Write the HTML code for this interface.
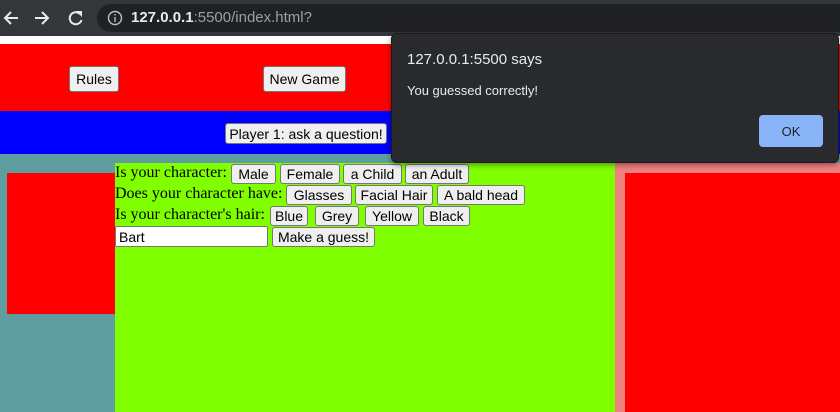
<!DOCTYPE html>
<html><head><meta charset="utf-8"><style>
*{margin:0;padding:0;box-sizing:border-box}
body{width:840px;height:412px;overflow:hidden;position:relative;background:#5f9ea0;font-family:"Liberation Serif",serif}
.a{position:absolute}
.btn{position:absolute;background:#efefef;border:1px solid #767676;border-radius:3px;font:14px "Liberation Sans",sans-serif;color:#000;display:flex;align-items:center;justify-content:center;white-space:nowrap}
.lbl{position:absolute;font-size:16px;color:#000;white-space:nowrap;line-height:20px}
</style></head><body>
<div class="a" style="left:0;top:0;width:840px;height:36px;background:#35363a"></div>
<div class="a" style="left:97px;top:4px;width:760px;height:28px;border-radius:14px;background:#202124"></div>
<svg class="a" style="left:0;top:6px" width="100" height="24" viewBox="0 0 100 24">
<path d="M18 12H6M11 6l-6 6 6 6" stroke="#e8eaed" stroke-width="2" fill="none"/>
<path d="M35 12h12M42 6l6 6-6 6" stroke="#e8eaed" stroke-width="2" fill="none"/>
<path d="M80 8a6 6 0 1 0 1.5 6" stroke="#e8eaed" stroke-width="2" fill="none"/><path d="M76 5h6v6z" fill="#e8eaed"/>
</svg>
<svg class="a" style="left:107px;top:10px" width="16" height="16"><circle cx="8" cy="8" r="6.5" stroke="#bdc1c6" stroke-width="1.4" fill="none"/><rect x="7.3" y="7" width="1.4" height="5" fill="#bdc1c6"/><rect x="7.3" y="4" width="1.4" height="1.5" fill="#bdc1c6"/></svg>
<div class="a" style="left:131px;top:9px;font:15px 'Liberation Sans',sans-serif;color:#e8eaed"><b style="font-weight:600">127.0.0.1</b><span style="color:#9aa0a6">:5500/index.html?</span></div>
<div class="a" style="left:0;top:36px;width:840px;height:8px;background:#fff"></div>
<div class="a" style="left:0;top:44px;width:840px;height:67px;background:#f00"></div>
<div class="a" style="left:0;top:111px;width:840px;height:43px;background:#00f"></div>
<div class="btn" style="left:69px;top:66px;width:50px;height:26px">Rules</div>
<div class="btn" style="left:263px;top:66px;width:83px;height:26px">New Game</div>
<div class="btn" style="left:225px;top:123px;width:162px;height:21px">Player 1: ask a question!</div>
<div class="a" style="left:7px;top:173px;width:108px;height:141px;background:#f00"></div>
<div class="a" style="left:615px;top:163px;width:225px;height:249px;background:#f08080"></div>
<div class="a" style="left:625px;top:173px;width:215px;height:239px;background:#f00"></div>
<div class="a" style="left:115px;top:163px;width:500px;height:249px;background:#7fff00"></div>
<div class="lbl" style="left:115px;top:163px">Is your character:</div>
<div class="btn" style="left:231px;top:164px;width:45px;height:20px">Male</div>
<div class="btn" style="left:280px;top:164px;width:60px;height:20px">Female</div>
<div class="btn" style="left:343px;top:164px;width:59px;height:20px">a Child</div>
<div class="btn" style="left:405px;top:164px;width:64px;height:20px">an Adult</div>
<div class="lbl" style="left:115px;top:184px">Does your character have:</div>
<div class="btn" style="left:286px;top:185px;width:66px;height:20px">Glasses</div>
<div class="btn" style="left:355px;top:185px;width:78px;height:20px">Facial Hair</div>
<div class="btn" style="left:437px;top:185px;width:88px;height:20px">A bald head</div>
<div class="lbl" style="left:115px;top:205px">Is your character's hair:</div>
<div class="btn" style="left:270px;top:206px;width:38px;height:20px">Blue</div>
<div class="btn" style="left:315px;top:206px;width:44px;height:20px">Grey</div>
<div class="btn" style="left:365px;top:206px;width:54px;height:20px">Yellow</div>
<div class="btn" style="left:423px;top:206px;width:47px;height:20px">Black</div>
<div class="a" style="left:115px;top:226px;width:153px;height:21px;background:#fff;border:1px solid #767676;border-radius:2px;font:14px 'Liberation Sans',sans-serif;padding:2px 3px">Bart</div>
<div class="btn" style="left:272px;top:227px;width:103px;height:20px">Make a guess!</div>
<div class="a" style="left:391px;top:33px;width:448px;height:130px;background:#292a2d;border-radius:6px;border:1px solid #1a1a1c;box-shadow:0 2px 6px rgba(0,0,0,.4)"></div>
<div class="a" style="left:407px;top:51px;font:15px 'Liberation Sans',sans-serif;color:#e8eaed">127.0.0.1:5500 says</div>
<div class="a" style="left:407px;top:83px;font:13px 'Liberation Sans',sans-serif;color:#e8eaed">You guessed correctly!</div>
<div class="a" style="left:759px;top:115px;width:64px;height:32px;background:#8ab4f8;border-radius:4px;font:13px 'Liberation Sans',sans-serif;color:#202124;display:flex;align-items:center;justify-content:center">OK</div>
</body></html>
